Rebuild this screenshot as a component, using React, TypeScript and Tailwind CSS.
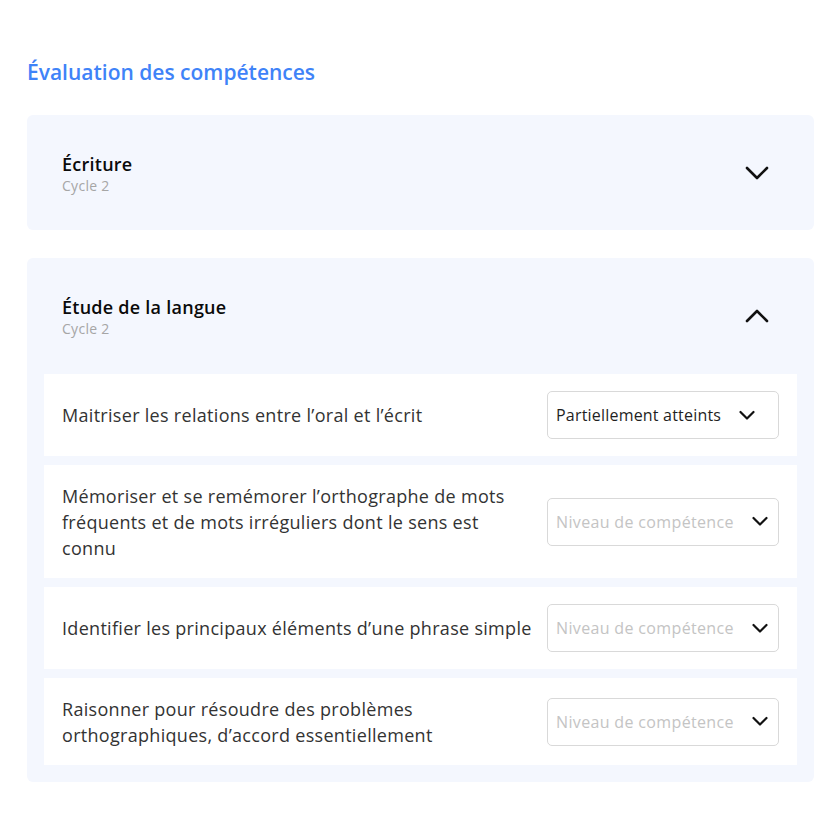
import React from "react";

const font = { fontFamily: '"Open Sans", "Noto Sans", sans-serif' };

function Chevron({ up = false }: { up?: boolean }) {
  return (
    <svg width="24" height="14" viewBox="0 0 24 14" fill="none" className="shrink-0">
      <polyline
        points={up ? "2,12 12,2 22,12" : "2,2 12,12 22,2"}
        stroke="#111"
        strokeWidth="2.6"
        strokeLinecap="round"
        strokeLinejoin="round"
      />
    </svg>
  );
}

function SmallChevron() {
  return (
    <svg width="16" height="11" viewBox="0 0 16 11" fill="none" className="shrink-0">
      <polyline points="1.5,2 8,8.5 14.5,2" stroke="#111" strokeWidth="2.2" strokeLinecap="round" strokeLinejoin="round" />
    </svg>
  );
}

function Select({ value }: { value?: string }) {
  return (
    <div className="w-[232px] h-[48px] shrink-0 rounded-[5px] border border-[#d9d9d9] bg-white flex items-center pl-[8px] gap-[18px]">
      <span
        className={
          value
            ? "text-[16px] tracking-[0.2px] text-[#1f1f1f]"
            : "text-[16px] tracking-[0.35px] text-[#c4c4c4]"
        }
      >
        {value ?? "Niveau de compétence"}
      </span>
      <SmallChevron />
    </div>
  );
}

const rows: { text: string; value?: string; h: string }[] = [
  { text: "Maitriser les relations entre l’oral et l’écrit", value: "Partiellement atteints", h: "h-[82px]" },
  { text: "Mémoriser et se remémorer l’orthographe de mots fréquents et de mots irréguliers dont le sens est connu", h: "h-[113px]" },
  { text: "Identifier les principaux éléments d’une phrase simple", h: "h-[82px]" },
  { text: "Raisonner pour résoudre des problèmes orthographiques, d’accord essentiellement", h: "h-[87px]" },
];

function Header({ title, up }: { title: string; up?: boolean }) {
  return (
    <div className="h-[115px] flex items-center justify-between pl-[35px] pr-[45px]">
      <div className="flex flex-col pt-[3px]">
        <span className="text-[18px] tracking-[0.25px] font-semibold text-[#0a0a0a] leading-[24px]">{title}</span>
        <span className="text-[14px] tracking-[0.3px] text-[#a6a6a6] leading-[20px]">Cycle 2</span>
      </div>
      <Chevron up={up} />
    </div>
  );
}

export default function App() {
  return (
    <div className="w-[840px] h-[840px] bg-white" style={font}>
      <div className="pt-[58px] px-[27px] w-[814px] box-content">
        <h1 className="text-[21px] font-semibold text-[#3f83f8] leading-[28px]">Évaluation des compétences</h1>
        <div className="mt-[29px] w-[787px] rounded-[6px] bg-[#f4f7fe]">
          <Header title="Écriture" />
        </div>
        <div className="mt-[28px] w-[787px] rounded-[6px] bg-[#f4f7fe] pb-[17px]">
          <Header title="Étude de la langue" up />
          <div className="pt-[1px] px-[17px] flex flex-col gap-[9px]">
            {rows.map((r, i) => (
              <div key={i} className={`${r.h} bg-white flex items-center pl-[18px] pr-[18px] gap-[14px]`}>
                <p className="flex-1 text-[18px] tracking-[0.3px] leading-[26px] text-[#333]">{r.text}</p>
                <Select value={r.value} />
              </div>
            ))}
          </div>
        </div>
      </div>
    </div>
  );
}
